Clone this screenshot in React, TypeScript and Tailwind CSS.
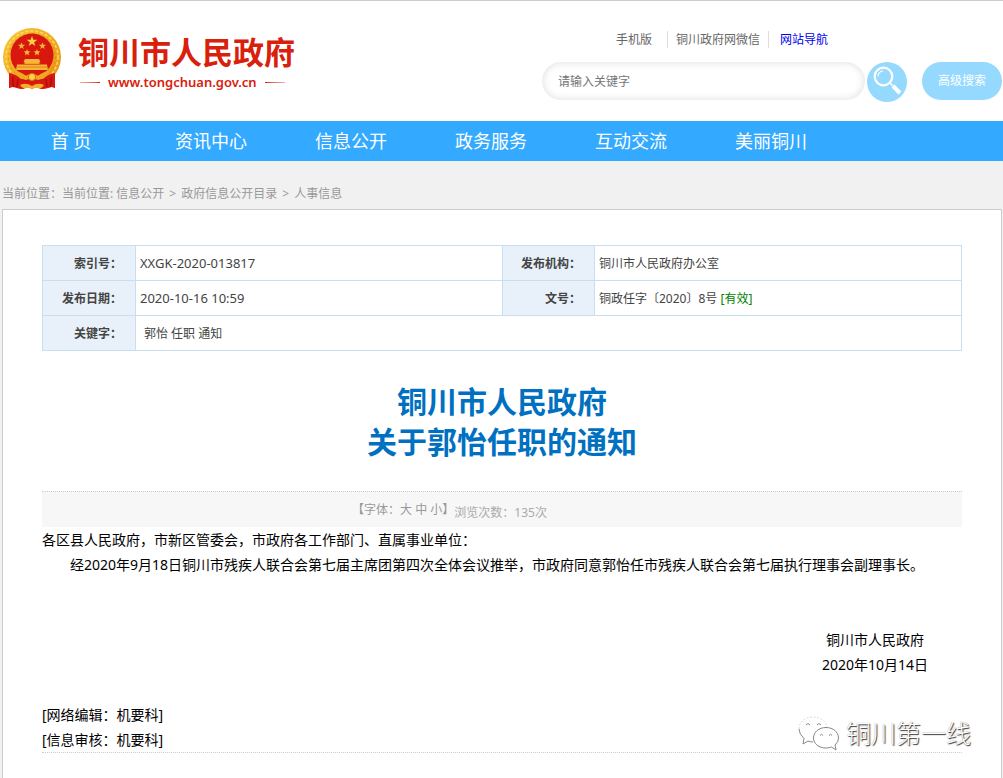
import React from 'react';

const navItems = ['首 页', '资讯中心', '信息公开', '政务服务', '互动交流', '美丽铜川'];

const star = (cx: number, cy: number, r: number): string =>
  Array.from({ length: 10 }, (_, i) => {
    const a = -Math.PI / 2 + (i * Math.PI) / 5;
    const d = i % 2 === 0 ? r : r * 0.4;
    return `${cx + d * Math.cos(a)},${cy + d * Math.sin(a)}`;
  }).join(' ');

function Emblem() {
  return (
    <svg viewBox="0 0 60 64" className="h-16 w-[60px] shrink-0" aria-hidden="true">
      <defs>
        <linearGradient id="gold" x1="0" y1="0" x2="1" y2="1">
          <stop offset="0" stopColor="#f9c93a" />
          <stop offset="0.5" stopColor="#f2ad22" />
          <stop offset="1" stopColor="#e58d12" />
        </linearGradient>
      </defs>
      <path d="M8 40 L7 61 Q11 59 15 61 L20 62 L30 59 L40 62 L46 61 Q50 59 53 61 L52 40 Z" fill="#d7190f" />
      <circle cx="30" cy="30" r="29" fill="url(#gold)" />
      <circle cx="30" cy="30" r="26" fill="none" stroke="#fbdc6c" strokeWidth="1.4" strokeDasharray="3 2" />
      <circle cx="30" cy="30" r="23.3" fill="none" stroke="#d98813" strokeWidth="1" strokeDasharray="2 3" />
      <circle cx="30" cy="28" r="21.5" fill="#d8180f" />
      <polygon points={star(30, 14.5, 5.6)} fill="#fbd14a" />
      <polygon points={star(19.5, 19, 3.8)} fill="#f8b93a" />
      <polygon points={star(40.5, 19, 3.8)} fill="#f8b93a" />
      <polygon points={star(25, 25.5, 3.6)} fill="#f8b93a" />
      <polygon points={star(35, 25.5, 3.6)} fill="#f8b93a" />
      <path d="M23 32 L37 32 L38.5 35 L21.5 35 Z M22.5 35 H37.5 V37 H22.5 Z M15 37.5 H45 L46 43 H14 Z" fill="#f8b636" />
      <path d="M21 37.2 H39 M15 40 H45" stroke="#cf6d15" strokeWidth="0.7" />
      <path d="M7 46 Q14 47 19 52 L41 52 Q46 47 53 46 L53 61 Q49 59 46 61 L40 62 L30 59 L20 62 L15 61 Q11 59 7 61 Z" fill="#d7190f" />
      <path d="M11 50 Q10 55 12 60 M49 50 Q50 55 48 60 M16 52 L15 60 M44 52 L45 60" stroke="#a50d08" strokeWidth="1.3" fill="none" />
      <path d="M12 43.5 Q19 44.5 24 49 Q30 44 36 49 Q41 44.5 48 43.5 Q45 51 36 53 L30 51 L24 53 Q15 51 12 43.5 Z" fill="#efa820" />
      <circle cx="30" cy="50" r="3.6" fill="#fbd14a" stroke="#cf7a12" strokeWidth="1" />
      <path d="M18 58 Q24 55 30 59 Q36 55 42 58 Q39 63 34 60.5 L30 62.5 L26 60.5 Q21 63 18 58 Z" fill="#f3b02a" />
    </svg>
  );
}

function SearchIcon() {
  return (
    <svg viewBox="0 0 40 40" className="h-10 w-10" fill="none" aria-hidden="true">
      <circle cx="16.5" cy="14.5" r="8.8" stroke="#fff" strokeWidth="2.2" />
      <path d="M11 14 Q11.5 10 15.5 9" stroke="#fff" strokeWidth="1.2" strokeLinecap="round" />
      <path d="M22.8 20.8 L26 24" stroke="#fff" strokeWidth="1.6" />
      <path d="M26 24 L33 31" stroke="#fff" strokeWidth="4" strokeLinecap="butt" />
    </svg>
  );
}

function WechatIcon() {
  return (
    <svg viewBox="0 0 42 36" className="h-9 w-[42px]" fill="#fff" stroke="#888" strokeWidth="1" aria-hidden="true">
      <path d="M15 27 Q12 27 10 26 L5 29 L6 23.5 Q1 19 1 14" />
      <path d="M1 14 C1 7 7 2 15 2 C22 2 28 6 29 12" stroke="#ddd" strokeDasharray="2 1.5" />
      <path d="M8 10 Q10 7 12 10 M19 10 Q21 7 23 10" fill="none" />
      <path d="M28 12.5 C21 12.5 15.5 17 15.5 23 C15.5 29 21 33 28 33 Q31 33 33.5 32 L38 35 L37 30 Q40.5 27 40.5 23 C40.5 17 35 12.5 28 12.5 Z" />
      <path d="M22 20.5 Q23.5 18 25 20.5 M31 20.5 Q32.5 18 34 20.5" fill="none" />
    </svg>
  );
}

const labelCell = 'border border-[#c7dff0] bg-[#e8f1f9] pt-0.5 pr-[13px] text-right font-bold';
const valueCell = 'border border-[#c7dff0] px-1 pt-0.5';

export default function App() {
  return (
    <div className="flex min-h-screen flex-col bg-[#f1f1f1] font-['Noto_Sans','Noto_Sans_CJK_SC',sans-serif] text-xs text-[#444]">
      <header className="flex h-[121px] items-start justify-between border-t border-[#ccc] bg-white pr-px pl-0.5">
        <a href="#home" className="flex gap-4 pt-[26px] text-[#d9200c]">
          <Emblem />
          <span className="flex flex-col pt-[3px]">
            <span className="text-[31px] leading-[44px] font-bold whitespace-nowrap">铜川市人民政府</span>
            <span className="flex items-center gap-2 pl-0.5 text-[13px] leading-4 font-semibold">
              <i className="h-px w-5 bg-linear-to-r from-[#f3b0a8] to-[#d9200c]" />
              www.tongchuan.gov.cn
              <i className="h-px w-5 bg-linear-to-l from-[#f3b0a8] to-[#d9200c]" />
            </span>
          </span>
        </a>
        <div className="flex flex-col gap-3.5 pt-[30px]">
          <div className="flex items-center pl-[74px] leading-[17px] text-[#666]">
            <a href="#mobile" className="border-r border-[#ddd] pr-[15px]">手机版</a>
            <a href="#wechat" className="border-r border-[#ddd] px-2">铜川政府网微信</a>
            <a href="#sitemap" className="pl-[11px] text-[#0000ee]">网站导航</a>
          </div>
          <form className="flex items-start" onSubmit={(e) => e.preventDefault()}>
            <input
              type="text"
              aria-label="请输入关键字"
              placeholder="请输入关键字"
              className="h-[38px] w-[323px] rounded-full bg-white px-4 shadow-[inset_0_0_8px_#ddd] outline-none placeholder:text-[#757575]"
            />
            <button type="submit" aria-label="搜索" className="ml-0.5 h-10 w-10 rounded-full bg-[#96d9ff]">
              <SearchIcon />
            </button>
            <button type="button" className="ml-[15px] h-[38px] w-20 rounded-full bg-[#96d9ff] text-white">
              高级搜索
            </button>
          </form>
        </div>
      </header>

      <nav className="flex h-10 bg-[#33aaff] pl-px text-lg leading-10 text-white">
        {navItems.map((item) => (
          <a key={item} href="#nav" className="w-[140px] text-center">
            {item}
          </a>
        ))}
      </nav>

      <div className="px-0.5 pt-[23px] pb-[5px] leading-5 text-[#999]">
        当前位置：当前位置: <a href="#info">信息公开</a>
        <span className="px-[5px]">&gt;</span>
        <a href="#catalog">政府信息公开目录</a>
        <span className="px-[5px]">&gt;</span>
        <a href="#personnel">人事信息</a>
      </div>

      <main className="relative mr-px ml-0.5 flex-1 border border-b-0 border-[#ccc] bg-white px-[39px] pt-[35px] pb-6">
        <table className="w-full table-fixed border-collapse">
          <colgroup>
            <col className="w-[93px]" />
            <col />
            <col className="w-[92px]" />
            <col />
          </colgroup>
          <tbody>
            <tr className="h-[35px]">
              <th scope="row" className={labelCell}>索引号：</th>
              <td className={`${valueCell} text-[13px]`}>XXGK-2020-013817</td>
              <th scope="row" className={labelCell}>发布机构：</th>
              <td className={valueCell}>铜川市人民政府办公室</td>
            </tr>
            <tr className="h-[35px]">
              <th scope="row" className={labelCell}>发布日期：</th>
              <td className={`${valueCell} text-[13px]`}>2020-10-16 10:59</td>
              <th scope="row" className={labelCell}>文号：</th>
              <td className={valueCell}>
                铜政任字〔2020〕8号 <span className="text-[#008000]">[有效]</span>
              </td>
            </tr>
            <tr className="h-[35px]">
              <th scope="row" className={labelCell}>关键字：</th>
              <td colSpan={3} className="border border-[#c7dff0] px-2 pt-0.5">郭怡 任职 通知</td>
            </tr>
          </tbody>
        </table>

        <h1 className="pt-[31px] pb-[29px] text-center text-[30px] leading-10 font-bold text-[#0070c0]">
          铜川市人民政府
          <br />
          关于郭怡任职的通知
        </h1>

        <div className="flex h-9 items-center justify-center border-t border-dotted border-[#ccc] bg-[#f7f7f7] pr-[105px] text-[#999]">
          <span>
            【字体：<a href="#large">大</a> <a href="#medium">中</a> <a href="#small">小</a>】
          </span>
          <span className="pt-1.5 text-[#aaa]">浏览次数：135次</span>
        </div>

        <article className="border-b border-dotted border-[#ccc] text-sm leading-[25px] text-black">
          <p>各区县人民政府，市新区管委会，市政府各工作部门、直属事业单位：</p>
          <p className="indent-7">
            经2020年9月18日铜川市残疾人联合会第七届主席团第四次全体会议推举，市政府同意郭怡任市残疾人联合会第七届执行理事会副理事长。
          </p>
          <div className="flex justify-end pt-[50px] pr-[34px] text-center">
            <p>
              铜川市人民政府
              <br />
              2020年10月14日
            </p>
          </div>
          <p className="pt-[25px]">[网络编辑：机要科]</p>
          <p>[信息审核：机要科]</p>
        </article>

        <div className="absolute right-[30px] bottom-[25px] flex items-center gap-1.5 text-[25px] leading-10 font-light text-white [text-shadow:1px_1px_1px_#333,0_0_1px_#888]">
          <WechatIcon />
          <span>铜川第一线</span>
        </div>
      </main>
    </div>
  );
}
